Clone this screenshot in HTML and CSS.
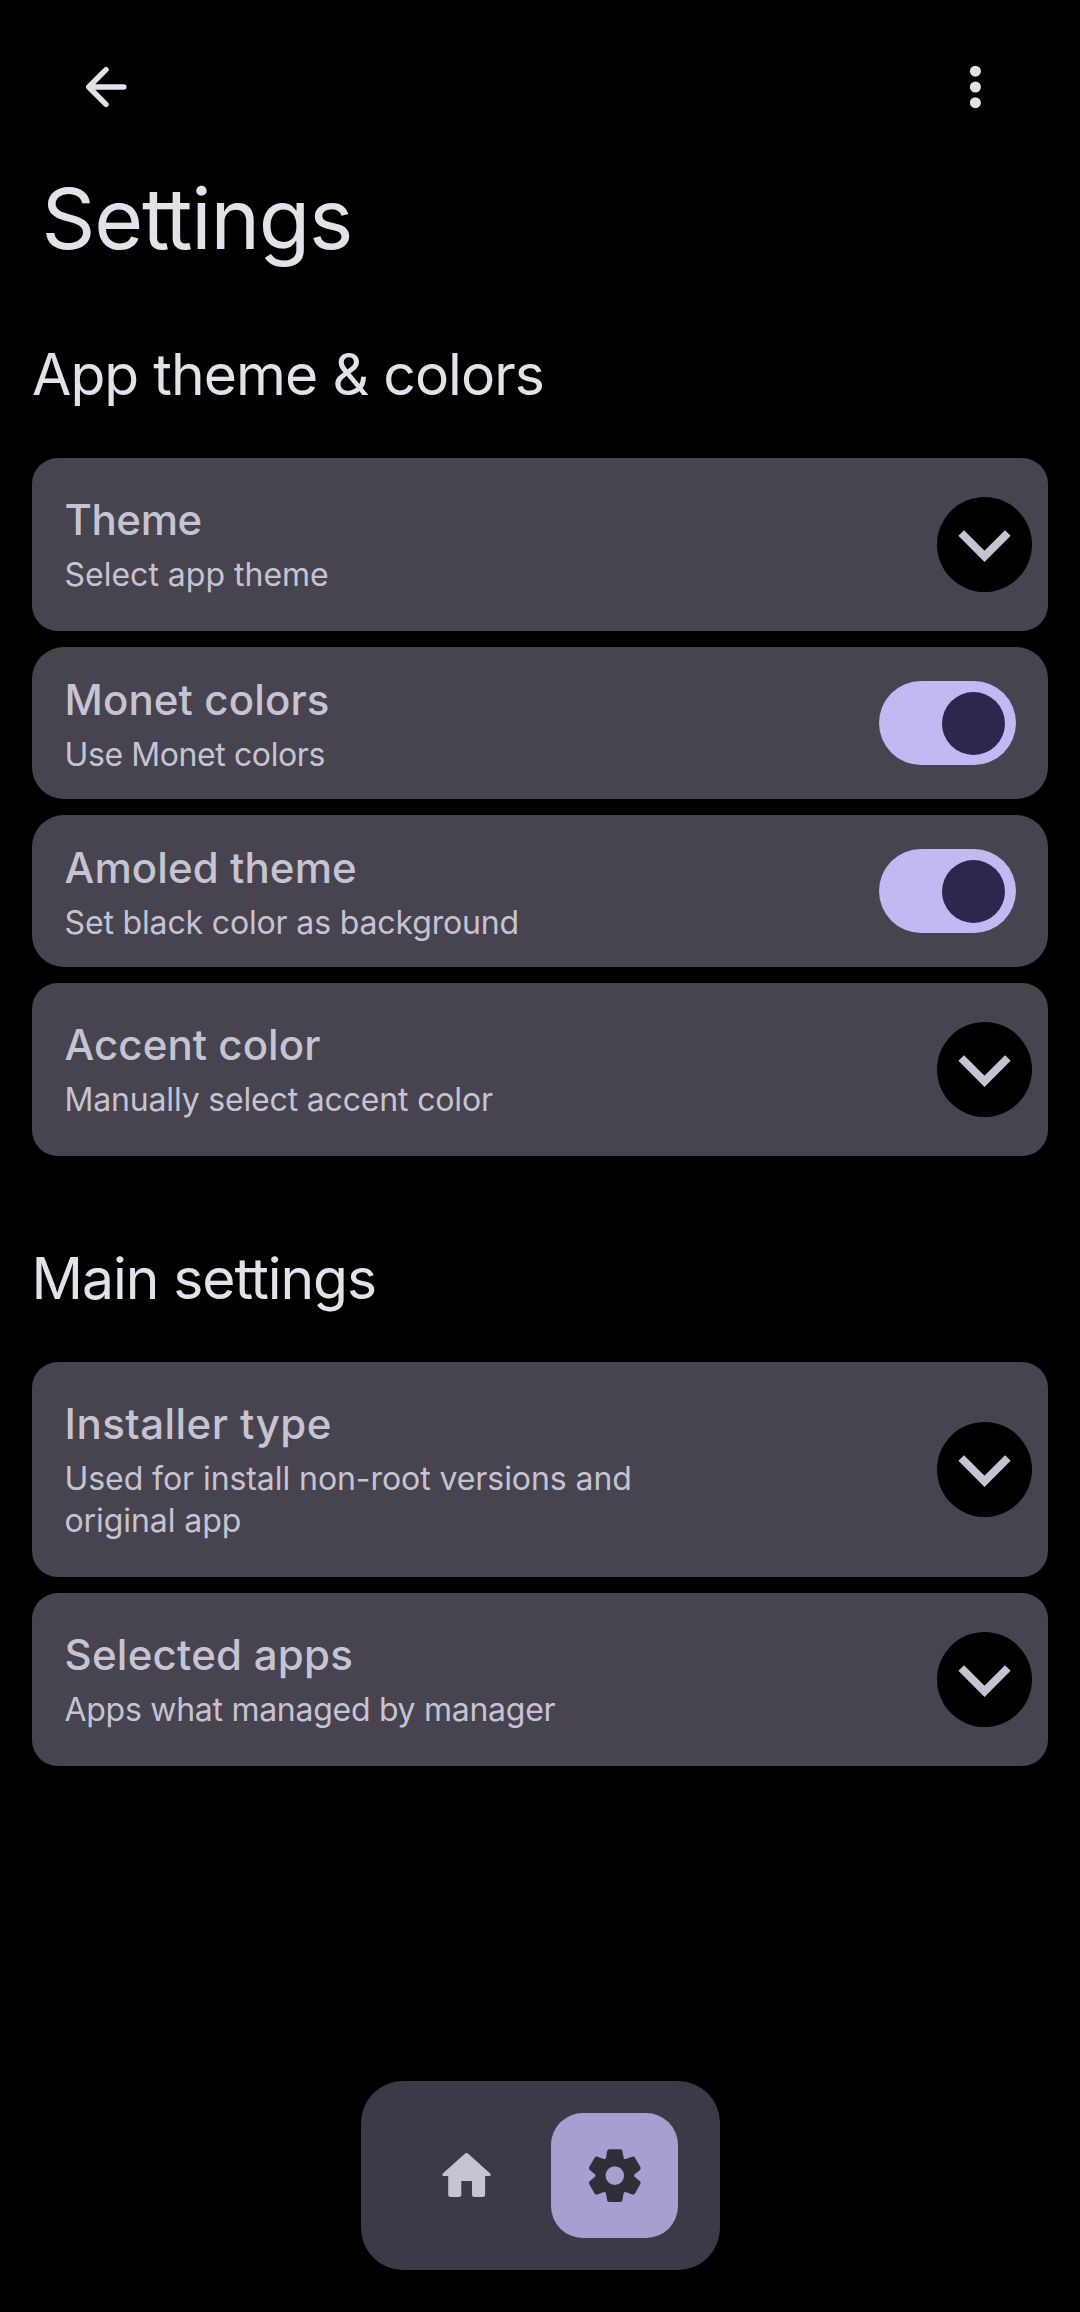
FILE: index.html
```html
<!DOCTYPE html>
<html lang="en">
<head>
<meta charset="utf-8">
<title>Settings</title>
<link rel="stylesheet" href="styles.css">
</head>
<body>
<header class="topbar">
  <svg class="topbar-icon" viewBox="0 0 60 60" fill="none" stroke="currentColor" stroke-width="5.4" stroke-linecap="round" stroke-linejoin="round"><path d="M47.8 30H13M30 12.7L12.7 30L30 47.3"/></svg>
  <svg class="topbar-icon" viewBox="0 0 60 60" fill="currentColor"><circle cx="30.4" cy="14.2" r="5.5"/><circle cx="30.4" cy="30" r="5.5"/><circle cx="30.4" cy="45.7" r="5.5"/></svg>
</header>
<main>
  <h1 class="page-title">Se<span class="tie">t</span>tings</h1>

  <h2 class="section-title section-title--first">App theme &amp; colors</h2>
  <section class="cards">
    <div class="card card--theme">
      <div class="card-text"><h3 class="card-title">Theme</h3><p class="card-sub">Select app theme</p></div>
      <div class="expand"><svg viewBox="0 0 95 95"><path d="M24.2 36L47.5 59.3L70.8 36"/></svg></div>
    </div>
    <div class="card card--switch card--monet">
      <div class="card-text"><h3 class="card-title">Monet colors</h3><p class="card-sub">Use Monet colors</p></div>
      <div class="switch"><div class="thumb"></div></div>
    </div>
    <div class="card card--switch card--amoled">
      <div class="card-text"><h3 class="card-title">Amoled theme</h3><p class="card-sub">Set black color as background</p></div>
      <div class="switch"><div class="thumb"></div></div>
    </div>
    <div class="card card--accent">
      <div class="card-text"><h3 class="card-title">Accent color</h3><p class="card-sub">Manually select accent color</p></div>
      <div class="expand"><svg viewBox="0 0 95 95"><path d="M24.2 36L47.5 59.3L70.8 36"/></svg></div>
    </div>
  </section>

  <h2 class="section-title">Main se<span class="tie">t</span>tings</h2>
  <section class="cards">
    <div class="card card--installer">
      <div class="card-text"><h3 class="card-title">Installer type</h3><p class="card-sub">Used for install non-root versions and original app</p></div>
      <div class="expand"><svg viewBox="0 0 95 95"><path d="M24.2 36L47.5 59.3L70.8 36"/></svg></div>
    </div>
    <div class="card card--apps">
      <div class="card-text"><h3 class="card-title">Selected apps</h3><p class="card-sub">Apps what managed by manager</p></div>
      <div class="expand"><svg viewBox="0 0 95 95"><path d="M24.2 36L47.5 59.3L70.8 36"/></svg></div>
    </div>
  </section>
</main>
<nav class="dock">
  <div class="tab">
    <svg viewBox="0.8 0.8 60 60" fill="currentColor"><path d="M28.6 8.6Q30.3 7 32 8.6L54.2 28.6Q55.2 30.6 53.2 30.8H48.9V49.2Q48.9 51.7 46.4 51.7H38.3Q35.8 51.7 35.8 49.2V35.8H25.1V49.2Q25.1 51.7 22.6 51.7H14.5Q12 51.7 12 49.2V30.8H7.4Q5.4 30.6 6.4 28.6Z"/></svg>
  </div>
  <div class="tab tab--active">
    <svg viewBox="-29.8 -29.6 60 60" fill="currentColor">
      <defs><path id="tooth" d="M-9.5 -14L-7.6 -24.6Q-7.2 -26.4 -5.4 -26.4H5.4Q7.2 -26.4 7.6 -24.6L9.5 -14Z"/></defs>
      <path fill-rule="evenodd" d="M-19.4 0A19.4 19.4 0 1 1 19.4 0A19.4 19.4 0 1 1 -19.4 0ZM-9.3 0A9.3 9.3 0 1 0 9.3 0A9.3 9.3 0 1 0 -9.3 0Z"/>
      <use href="#tooth"/><use href="#tooth" transform="rotate(60)"/><use href="#tooth" transform="rotate(120)"/><use href="#tooth" transform="rotate(180)"/><use href="#tooth" transform="rotate(240)"/><use href="#tooth" transform="rotate(300)"/>
    </svg>
  </div>
</nav>
</body>
</html>
```
FILE: styles.css
```css
* { box-sizing: border-box; }

body {
  margin: 0;
  height: 2312px;
  display: flex;
  flex-direction: column;
  background: #000;
  color: #e4e1e9;
  font-family: Inter, "Liberation Sans", sans-serif;
  overflow: hidden;
}

h1, h2, h3, p { margin: 0; font-weight: 400; }

/* Top bar */
.topbar {
  height: 174px;
  padding: 0 75px 0 76px;
  display: flex;
  align-items: center;
  justify-content: space-between;
}
.topbar-icon { width: 60px; height: 60px; }

/* Headings */
.page-title {
  padding: 3px 0 0 41.5px;
  font-size: 84px;
  line-height: 84px;
  letter-spacing: -1.2px;
}
.page-title .tie { letter-spacing: -4.5px; }

.section-title {
  margin: 93px 0 53px;
  padding-left: 31.5px;
  font-size: 57px;
  line-height: 60px;
  letter-spacing: -1.05px;
}
.section-title--first {
  margin: 84px 0 53px;
  padding-left: 32px;
  letter-spacing: -0.95px;
}
.section-title .tie { letter-spacing: -3px; }

/* Cards */
.cards {
  padding: 0 32px;
  display: flex;
  flex-direction: column;
  gap: 16px;
}
.card {
  min-height: 173px;
  padding: 35px 16px 35px 32px;
  display: flex;
  align-items: center;
  justify-content: space-between;
  border-radius: 26px;
  background: #47444f;
  color: #c6c3d2;
}
.card--switch {
  height: 152px;
  min-height: 152px;
  padding: 0 32px;
  border-radius: 32px;
}
.card--switch .card-text { padding-top: 2px; }
.card-text { width: 620px; padding-left: 0.5px; }
.card-title {
  font-size: 42px;
  line-height: 54px;
  font-weight: 500;
}
.card-sub {
  margin-top: 7px;
  font-size: 32px;
  line-height: 42px;
}

/* Tracking per row */
.card--theme .card-title { letter-spacing: -0.41px; }
.card--monet .card-title { letter-spacing: 0.12px; }
.card--monet .card-sub { letter-spacing: -0.4px; }
.card--amoled .card-title { letter-spacing: 0.1px; }
.card--amoled .card-sub { letter-spacing: -0.15px; }
.card--accent .card-title { letter-spacing: 0.07px; }
.card--accent .card-sub { letter-spacing: -0.17px; }
.card--installer .card-title { letter-spacing: 0.46px; }
.card--installer .card-sub { letter-spacing: -0.07px; }
.card--apps .card-title { letter-spacing: 0.25px; }
.card--apps .card-sub { letter-spacing: -0.28px; }

.expand {
  width: 95px;
  height: 95px;
  border-radius: 50%;
  background: #000;
}
.expand svg {
  display: block;
  fill: none;
  stroke: #c6c3d2;
  stroke-width: 8;
}

.switch {
  width: 137px;
  height: 84px;
  padding: 0 11px;
  display: flex;
  align-items: center;
  justify-content: flex-end;
  border-radius: 42px;
  background: #c2b8f2;
}
.thumb {
  width: 63px;
  height: 63px;
  margin-top: 1px;
  border-radius: 50%;
  background: #2e264d;
}

/* Bottom dock */
.dock {
  width: 359px;
  height: 189px;
  margin: auto 360px 42px 361px;
  padding: 32px 42px;
  display: flex;
  justify-content: space-between;
  border-radius: 42px;
  background: #3d3a48;
}
.tab {
  width: 127px;
  height: 125px;
  display: flex;
  align-items: center;
  justify-content: center;
  border-radius: 32px;
  color: #c6c4d1;
}
.tab svg { width: 60px; height: 60px; }
.tab--active {
  background: #a79fd0;
  color: #302f37;
}
```
